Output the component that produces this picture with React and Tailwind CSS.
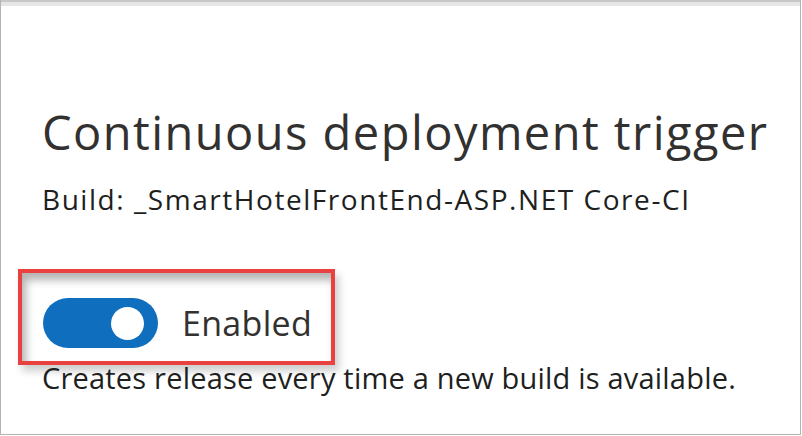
import React, { useState } from 'react';

const Toggle = ({ on, onChange }) => (
  <button
    type="button"
    onClick={() => onChange(!on)}
    className={`flex items-center w-[115px] h-[50px] rounded-full px-[14px] ${on ? 'bg-[#106ebe] justify-end' : 'bg-gray-300 justify-start'}`}
  >
    <span className="block w-[33px] h-[33px] rounded-full bg-white" />
  </button>
);

const App = () => {
  const [enabled, setEnabled] = useState(true);

  return (
    <div className="w-[802px] h-[436px] bg-white overflow-hidden" style={{ fontFamily: '"Open Sans", "Noto Sans", sans-serif' }}>
      <div className="w-[801px] h-[435px] border-l border-r border-b border-[#b4b4b4] flex flex-col">
        {/* top edge */}
        <div className="h-[6px] border-t-[2px] border-[#c8c8c8] bg-[#e6e6e6]" />
        <div className="pl-[41px] pt-[98px] text-[#323130]">
          <h1 className="text-[47px] leading-[56px] tracking-[1.45px] whitespace-nowrap">Continuous deployment trigger</h1>
          <p className="mt-[22px] text-[28px] leading-[34px] tracking-[1.55px] text-[#201f1e] whitespace-nowrap">Build: _SmartHotelFrontEnd-ASP.NET Core-CI</p>
        </div>
        <div className="ml-[17px] mt-[53px] w-[317px] h-[96px] border-[4px] border-[#e8413f] shadow-[inset_4px_7px_9px_rgba(0,0,0,0.3),4px_6px_8px_rgba(0,0,0,0.2)] flex items-center gap-[24px] pl-[21px] pt-[12px]">
          <Toggle on={enabled} onChange={setEnabled} />
          <span className="text-[34px] leading-[40px] tracking-[0.3px] text-[#323130]">Enabled</span>
        </div>
        <p className="pl-[41px] text-[29px] leading-[26px] tracking-[0.2px] text-[#201f1e] whitespace-nowrap">
          Creates release every time a new build is available.
        </p>
      </div>
    </div>
  );
};

export default App;
